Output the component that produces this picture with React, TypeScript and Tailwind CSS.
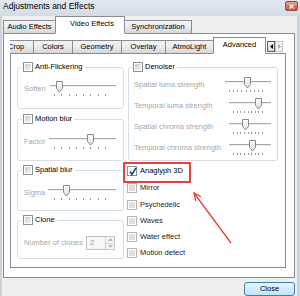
import React from "react";

function Check({ checked = false, disabled = false }: { checked?: boolean; disabled?: boolean }) {
  return (
    <span
      className={`relative flex h-[10px] w-[10px] shrink-0 border bg-white p-[1px] ${
        disabled ? "border-[#b4b4b4]" : "border-[#8e8f8f]"
      }`}
    >
      <span
        className={`flex-1 ${
          checked
            ? "bg-gradient-to-br from-[#eef1f5] to-white"
            : disabled
            ? "bg-[#dedede]"
            : "bg-gradient-to-br from-[#c6cbd2] to-[#f6f6f6]"
        }`}
      />
      {checked && (
        <svg className="absolute left-[1px] top-[0px]" width="8" height="9" viewBox="0 0 8 9">
          <path d="M1 4.5 L3 7.5 L7 0.8" fill="none" stroke="#1d3f86" strokeWidth="1.6" />
        </svg>
      )}
    </span>
  );
}

function Slider({
  w,
  thumb,
  ticks,
  t0,
  t1,
}: {
  w: number;
  thumb: number;
  ticks: number;
  t0: number;
  t1: number;
}) {
  return (
    <div className="relative h-[16px] shrink-0" style={{ width: w }}>
      <div className="absolute left-0 right-0 top-[4px] h-[2px] border-t border-b border-t-[#a9a9a9] border-b-[#eeeeee] bg-[#e4e4e4]" />
      <div className="absolute top-[13px] flex h-[2px] justify-between" style={{ left: t0, width: t1 - t0 }}>
        {Array.from({ length: ticks }).map((_, i) => (
          <span key={i} className="h-[2px] w-[1px] bg-[#9a9a9a]" />
        ))}
      </div>
      <svg className="absolute top-0" style={{ left: thumb - 3.5 }} width="7" height="12" viewBox="0 0 7 12">
        <defs>
          <linearGradient id="tg" x1="0" y1="0" x2="0" y2="1">
            <stop offset="0" stopColor="#ffffff" />
            <stop offset="1" stopColor="#dcdcdc" />
          </linearGradient>
        </defs>
        <path d="M0.5 0.5 H6.5 V7.5 L3.5 11 L0.5 7.5 Z" fill="url(#tg)" stroke="#8a8a8a" strokeWidth="1" />
      </svg>
    </div>
  );
}

function Group({
  title,
  children,
  boxClass,
  headClass,
}: {
  title: string;
  children: React.ReactNode;
  boxClass: string;
  headClass: string;
}) {
  return (
    <div className="flex flex-col">
      <div className={`relative z-10 flex h-[10px] w-fit items-center gap-[2px] bg-white pl-[1px] pr-[2px] ${headClass}`}>
        <Check />
        <span className="leading-[10px] text-black">{title}</span>
      </div>
      <div className={`-mt-[5px] rounded-[3px] border border-[#d5dfe5] ${boxClass}`}>{children}</div>
    </div>
  );
}

function Tab({
  label,
  selected = false,
  className = "",
}: {
  label: string;
  selected?: boolean;
  className?: string;
}) {
  return (
    <div
      className={`flex items-center justify-center border border-[#898c95] ${
        selected
          ? "relative z-10 border-b-white bg-white"
          : "bg-gradient-to-b from-[#f3f3f3] via-[#ebebeb] to-[#d6d6d6]"
      } ${className}`}
    >
      <span className="leading-[10px] text-black">{label}</span>
    </div>
  );
}

export default function App() {
  return (
    <div className="relative flex h-[296px] w-[300px] flex-col overflow-hidden bg-[#f0f0f0] font-['Liberation_Sans',Arial,sans-serif] text-[7.5px]">
      {/* Title bar */}
      <div className="flex h-[16px] shrink-0 items-start justify-between bg-gradient-to-b from-[#e3e9f0] to-[#d3dbe5] pl-[3px]">
        <span className="pt-[1px] text-[8.5px] leading-[11px] text-black">Adjustments and Effects</span>
        <div className="mr-[2px] mt-[1px] flex h-[10px] w-[13px] items-center justify-center rounded-[2px] border border-[#9a4a3c] bg-gradient-to-b from-[#eba090] to-[#c8503a]">
          <svg width="5" height="5" viewBox="0 0 5 5">
            <path d="M0.5 0.5 L4.5 4.5 M4.5 0.5 L0.5 4.5" stroke="#ffffff" strokeWidth="1.2" />
          </svg>
        </div>
      </div>

      {/* Body */}
      <div className="flex flex-1 flex-col border-l-[2px] border-r-[3px] border-[#c9d1db] pl-[1px] pr-[2px]">
        {/* Outer tabs */}
        <div className="-mb-[1px] flex h-[18px] items-end">
          <Tab label="Audio Effects" className="h-[14px] w-[53px]" />
          <Tab label="Video Effects" selected className="-ml-[1px] h-[18px] w-[70px] pb-[2px] pl-[4px]" />
          <Tab label="Synchronization" className="-ml-[1px] h-[14px] w-[68px]" />
        </div>

        {/* Outer panel */}
        <div className="flex h-[245px] flex-col border border-[#898c95] bg-white pb-[9px] pl-[6px] pr-[8px] pt-[3px]">
          {/* Inner tabs */}
          <div className="-mb-[1px] flex h-[17px] items-end">
            <div className="flex h-[14px] w-[24px] items-center justify-start overflow-hidden border border-l-0 border-[#898c95] bg-gradient-to-b from-[#f3f3f3] via-[#ebebeb] to-[#d6d6d6]">
              <span className="-ml-[2px] leading-[10px] text-black">Crop</span>
            </div>
            <Tab label="Colors" className="-ml-[1px] h-[14px] w-[40px]" />
            <Tab label="Geometry" className="-ml-[1px] h-[14px] w-[50px]" />
            <Tab label="Overlay" className="-ml-[1px] h-[14px] w-[45px]" />
            <Tab label="AtmoLight" className="-ml-[1px] h-[14px] w-[49px]" />
            <Tab label="Advanced" selected className="-ml-[1px] h-[17px] w-[53px] pb-[2px]" />
            <div className="mb-[2px] ml-[1px] flex h-[11px] w-[8px] items-center justify-center border border-[#5a5a5a] bg-gradient-to-b from-[#f6f6f6] to-[#dcdcdc]">
              <svg width="3" height="5" viewBox="0 0 3 5">
                <path d="M3 0 L0 2.5 L3 5 Z" fill="#000" />
              </svg>
            </div>
            <div className="mb-[2px] flex h-[11px] w-[8px] items-center justify-center border border-[#c6c6c6] bg-[#f4f4f4]">
              <svg width="3" height="5" viewBox="0 0 3 5">
                <path d="M0 0 L3 2.5 L0 5 Z" fill="#a8a8a8" />
              </svg>
            </div>
          </div>

          {/* Inner panel */}
          <div className="flex h-[215px] gap-[4px] border border-[#898c95] bg-white pl-[6px] pr-[7px] pt-[8px]">
            {/* Left column */}
            <div className="flex w-[107px] flex-col">
              <Group title="Anti-Flickering" headClass="ml-[5px]" boxClass="h-[42px] pl-[6px] pt-[13px]">
                <div className="flex h-[16px] items-center">
                  <span className="w-[26px] text-[#a7a7a7]">Soften</span>
                  <Slider w={66} thumb={9} ticks={8} t0={4} t1={56} />
                </div>
              </Group>
              <div className="mt-[5px]">
                <Group title="Motion blur" headClass="ml-[5px]" boxClass="h-[42px] pl-[6px] pt-[14px]">
                  <div className="flex h-[16px] items-center">
                    <span className="w-[25px] text-[#a7a7a7]">Factor</span>
                    <Slider w={67} thumb={41} ticks={8} t0={5} t1={57} />
                  </div>
                </Group>
              </div>
              <div className="mt-[4px]">
                <Group title="Spatial blur" headClass="ml-[5px]" boxClass="h-[41px] pl-[6px] pt-[14px]">
                  <div className="flex h-[16px] items-center">
                    <span className="w-[24px] text-[#a7a7a7]">Sigma</span>
                    <Slider w={68} thumb={18} ticks={8} t0={6} t1={58} />
                  </div>
                </Group>
              </div>
              <div className="mt-[4px]">
                <Group title="Clone" headClass="ml-[5px]" boxClass="h-[39px] pl-[6px] pt-[15px]">
                  <div className="flex h-[14px] items-center">
                    <span className="w-[62px] text-[#a7a7a7]">Number of clones</span>
                    <div className="flex h-[14px] w-[29px] border border-[#c4c4c4] bg-[#f7f7f7]">
                      <span className="flex flex-1 items-center pl-[3px] text-[8px] leading-[10px] text-[#9a9a9a]">2</span>
                      <div className="flex w-[9px] flex-col border-l border-[#d0d0d0]">
                        <div className="flex flex-1 items-center justify-center border-b border-[#d8d8d8]">
                          <svg width="5" height="3" viewBox="0 0 5 3">
                            <path d="M0 3 L2.5 0 L5 3 Z" fill="#b8b8b8" />
                          </svg>
                        </div>
                        <div className="flex flex-1 items-center justify-center">
                          <svg width="5" height="3" viewBox="0 0 5 3">
                            <path d="M0 0 L2.5 3 L5 0 Z" fill="#b8b8b8" />
                          </svg>
                        </div>
                      </div>
                    </div>
                  </div>
                </Group>
              </div>
            </div>

            {/* Right column */}
            <div className="flex w-[150px] flex-col">
              <Group title="Denoiser" headClass="ml-[4px]" boxClass="h-[94px] pl-[5px] pr-[6px] pt-[6px]">
                {[
                  { l: "Spatial luma strength", w: 46, t: 22, n: 9, t0: 4, t1: 38 },
                  { l: "Temporal luma strength", w: 42, t: 29, n: 9, t0: 4, t1: 34 },
                  { l: "Spatial chroma strength", w: 42, t: 16, n: 9, t0: 4, t1: 34 },
                  { l: "Temporal chroma strength", w: 42, t: 23, n: 9, t0: 4, t1: 34 },
                ].map((r) => (
                  <div key={r.l} className="flex h-[21px] items-center justify-between">
                    <span className="text-[#a7a7a7]">{r.l}</span>
                    <Slider w={r.w} thumb={r.t} ticks={r.n} t0={r.t0} t1={r.t1} />
                  </div>
                ))}
              </Group>

              <div className="-ml-[1px] mt-[2px] flex flex-col">
                <div className="relative flex h-[16px] items-center gap-[3px]">
                  <div className="absolute -left-[4px] -top-[1px] h-[21px] w-[68px] rounded-[1px] border-[2px] border-[#e8413c]" />
                  <Check checked />
                  <span className="text-black">Anaglyph 3D</span>
                </div>
                {[
                  { l: "Mirror", h: "h-[17px]" },
                  { l: "Psychedelic", h: "h-[17px]" },
                  { l: "Waves", h: "h-[16px]" },
                  { l: "Water effect", h: "h-[16px]" },
                  { l: "Motion detect", h: "h-[16px]" },
                ].map((r) => (
                  <div key={r.l} className={`flex items-center gap-[3px] ${r.h}`}>
                    <Check disabled />
                    <span className="text-[#222]">{r.l}</span>
                  </div>
                ))}
              </div>
            </div>
          </div>
        </div>

        {/* Bottom bar */}
        <div className="flex justify-end pt-[4px]">
          <button className="flex h-[14px] w-[51px] items-center justify-center rounded-[3px] border border-[#3c7fb1] bg-gradient-to-b from-[#eaf6fd] to-[#bfe2f5] text-[7.5px] leading-[10px] text-black">
            Close
          </button>
        </div>
      </div>

      {/* Annotation arrow */}
      <svg className="pointer-events-none absolute left-0 top-0" width="300" height="296" viewBox="0 0 300 296">
        <path d="M231 243 L194 193" stroke="#e8413c" strokeWidth="1.3" fill="none" />
        <path d="M195.8 201 L194 193 L201 196.8" stroke="#e8413c" strokeWidth="1.3" fill="none" />
      </svg>
    </div>
  );
}
